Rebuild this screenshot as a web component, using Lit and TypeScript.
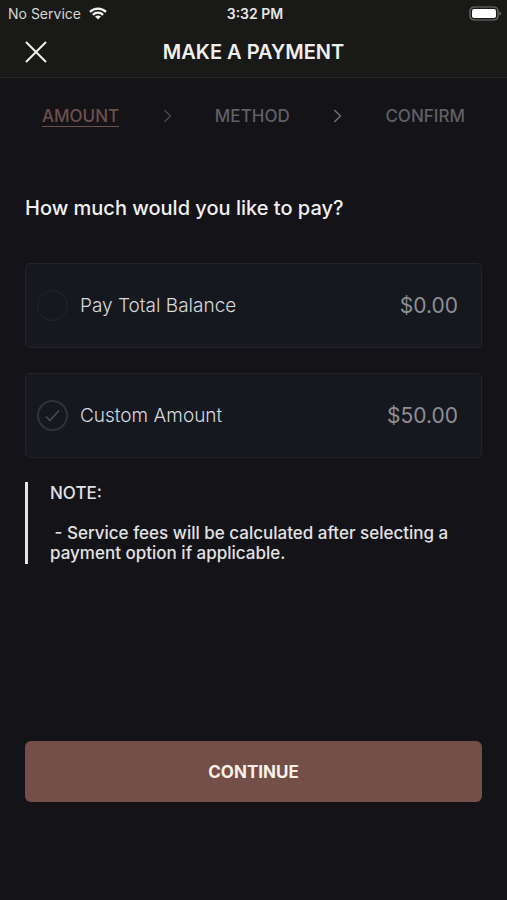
import { LitElement, html, css, svg } from "lit";
import { customElement, state } from "lit/decorators.js";
import { classMap } from "lit/directives/class-map.js";

interface PayOption {
  id: string;
  label: string;
  amount: string;
}

const OPTIONS: PayOption[] = [
  { id: "total", label: "Pay Total Balance", amount: "$0.00" },
  { id: "custom", label: "Custom Amount", amount: "$50.00" },
];

@customElement("status-bar")
class StatusBar extends LitElement {
  static styles = css`
    :host {
      display: grid;
      grid-template-columns: 1fr auto 1fr;
      align-items: center;
      height: 27px;
      padding: 0 5px 0 8px;
      font-size: 14px;
      line-height: 20px;
      color: #d6d6d4;
    }
    .carrier {
      display: flex;
      align-items: center;
      gap: 8px;
    }
    .time {
      font-weight: 600;
      color: #e6e6e4;
    }
    .battery {
      justify-self: end;
    }
    svg {
      display: block;
    }
  `;

  render() {
    return html`
      <div class="carrier">
        <span>No Service</span>
        <svg width="18" height="13" viewBox="0 0 18 13" role="img" aria-label="Wi-Fi">
          <g fill="none" stroke="#f4f4f2" stroke-width="2.3">
            <path d="M1 4.9C5.5 0.5 12.5 0.5 17 4.9" />
            <path d="M3.9 7.8C6.8 5 11.2 5 14.1 7.8" />
          </g>
          <path d="M9 12.6L6 9.6C7.7 8.2 10.3 8.2 12 9.6Z" fill="#f4f4f2" />
        </svg>
      </div>
      <span class="time">3:32 PM</span>
      <svg class="battery" width="33" height="15" viewBox="0 0 33 15" role="img" aria-label="Battery full">
        <rect x="1" y="1" width="28" height="13" rx="4" fill="none" stroke="#777775" stroke-width="1.2" />
        <rect x="3" y="3" width="24" height="9" rx="2" fill="#fff" />
        <path d="M30.5 5.5C32.3 6 32.3 9 30.5 9.5Z" fill="#777775" />
      </svg>
    `;
  }
}

@customElement("step-trail")
class StepTrail extends LitElement {
  static styles = css`
    ol {
      display: flex;
      justify-content: space-between;
      align-items: center;
      margin: 0;
      padding: 0 42px;
      list-style: none;
      font-size: 17px;
      line-height: 20px;
      font-weight: 500;
      color: #606064;
    }
    li {
      display: block;
    }
    .current {
      color: #6f4f48;
      box-shadow: 0 1px 0 #6f4f48;
    }
    svg {
      display: block;
      fill: none;
      stroke: #77777a;
      stroke-width: 1.3;
    }
    .dim {
      stroke: #4a4a4d;
    }
  `;

  private chevron(dim: boolean) {
    return html`<li aria-hidden="true">
      <svg class=${classMap({ dim })} width="9" height="14" viewBox="0 0 9 14">
        ${svg`<path d="M1.3 1L7.5 7L1.3 13" />`}
      </svg>
    </li>`;
  }

  render() {
    return html`
      <ol>
        <li class="current" aria-current="step">AMOUNT</li>
        ${this.chevron(true)}
        <li>METHOD</li>
        ${this.chevron(false)}
        <li>CONFIRM</li>
      </ol>
    `;
  }
}

@customElement("app-root")
class AppRoot extends LitElement {
  @state() private selected = "custom";

  static styles = css`
    :host {
      display: flex;
      flex-direction: column;
      box-sizing: border-box;
      min-height: 100vh;
      background: #141318;
      color: #f0f0f2;
      font-family: Inter, "Liberation Sans", sans-serif;
    }
    .top {
      background: #191a18;
      border-bottom: 1px solid #242624;
    }
    .bar {
      display: grid;
      grid-template-columns: 1fr auto 1fr;
      align-items: center;
      height: 50px;
      padding: 0 24px;
    }
    .close {
      display: block;
      width: 24px;
      height: 24px;
      padding: 0;
      border: 0;
      background: none;
      cursor: pointer;
    }
    .close svg {
      display: block;
    }
    h1 {
      margin: 0;
      font-size: 20px;
      line-height: 24px;
      font-weight: 600;
      color: #efefed;
    }
    step-trail {
      display: block;
      margin-top: 28px;
    }
    main {
      display: flex;
      flex-direction: column;
      flex: 1;
      padding: 68px 25px 98px;
    }
    fieldset {
      display: grid;
      gap: 25px;
      margin: 0;
      padding: 0;
      border: 0;
      min-width: 0;
    }
    legend {
      margin-bottom: 41px;
      padding: 0;
      font-size: 20px;
      line-height: 28px;
      font-weight: 500;
    }
    .option {
      display: flex;
      align-items: center;
      box-sizing: border-box;
      height: 85px;
      padding: 0 23px 0 11px;
      border: 1px solid #242427;
      border-radius: 5px;
      background: #15181f;
      cursor: pointer;
    }
    input {
      appearance: none;
      display: block;
      box-sizing: border-box;
      width: 31px;
      height: 31px;
      margin: 0 12px 0 0;
      border: 1px solid #24252a;
      border-radius: 50%;
    }
    input:checked {
      border: 2px solid #323336;
    }
    .mark {
      display: grid;
      align-items: center;
    }
    .mark > * {
      grid-area: 1 / 1;
    }
    .mark svg {
      margin-left: 8px;
      pointer-events: none;
    }
    .name {
      flex: 1;
      font-size: 19px;
      font-weight: 300;
      color: #d8d9dc;
    }
    .amount {
      font-size: 21px;
      color: #8e8f93;
    }
    .note {
      margin: 24px 0 48px;
      padding: 1px 0 1px 22px;
      border-left: 3px solid #e6e4e8;
      font-size: 17px;
      line-height: 20px;
      font-weight: 500;
      color: #e2e2e5;
    }
    .note p {
      margin: 0;
      white-space: pre-wrap;
    }
    .note p + p {
      margin-top: 20px;
    }
    .continue {
      height: 61px;
      margin-top: auto;
      border: 0;
      border-radius: 6px;
      background: #734f47;
      color: #fbf0ea;
      font: inherit;
      font-size: 17px;
      font-weight: 700;
      cursor: pointer;
    }
  `;

  private renderOption(o: PayOption) {
    const checked = this.selected === o.id;
    return html`
      <label class="option">
        <span class="mark">
          <input
            type="radio"
            name="amount"
            .value=${o.id}
            .checked=${checked}
            @change=${() => (this.selected = o.id)}
          />
          ${checked
            ? html`<svg width="15" height="13" viewBox="0 0 15 13" fill="none" stroke="#4e4f51" stroke-width="1.5">
                <path d="M1 7.5L5 11.5L14 1.5" />
              </svg>`
            : null}
        </span>
        <span class="name">${o.label}</span>
        <span class="amount">${o.amount}</span>
      </label>
    `;
  }

  render() {
    return html`
      <header class="top">
        <status-bar></status-bar>
        <div class="bar">
          <button class="close" type="button" aria-label="Close">
            <svg width="24" height="24" viewBox="0 0 24 24" stroke="#efefed" stroke-width="2">
              <path d="M2 2L22 22M22 2L2 22" />
            </svg>
          </button>
          <h1>MAKE A PAYMENT</h1>
        </div>
      </header>
      <step-trail></step-trail>
      <main>
        <fieldset>
          <legend>How much would you like to pay?</legend>
          ${OPTIONS.map((o) => this.renderOption(o))}
        </fieldset>
        <div class="note">
          <p>NOTE:</p>
          <p>${" - Service fees will be calculated after selecting a payment option if applicable."}</p>
        </div>
        <button class="continue" type="button">CONTINUE</button>
      </main>
    `;
  }
}
